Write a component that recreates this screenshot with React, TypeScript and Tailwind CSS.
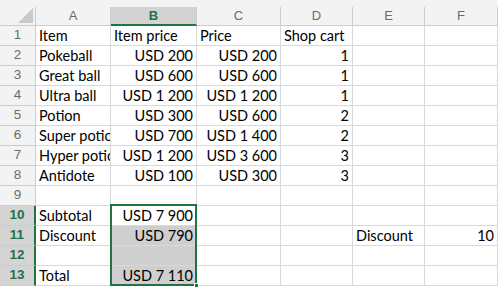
import React from 'react'

const cols = ['A', 'B', 'C', 'D', 'E', 'F']

type Cell = { v?: string; right?: boolean }

const rows: Cell[][] = [
  [{ v: 'Item' }, { v: 'Item price' }, { v: 'Price' }, { v: 'Shop cart' }, {}, {}],
  [{ v: 'Pokeball' }, { v: 'USD 200', right: true }, { v: 'USD 200', right: true }, { v: '1', right: true }, {}, {}],
  [{ v: 'Great ball' }, { v: 'USD 600', right: true }, { v: 'USD 600', right: true }, { v: '1', right: true }, {}, {}],
  [{ v: 'Ultra ball' }, { v: 'USD 1 200', right: true }, { v: 'USD 1 200', right: true }, { v: '1', right: true }, {}, {}],
  [{ v: 'Potion' }, { v: 'USD 300', right: true }, { v: 'USD 600', right: true }, { v: '2', right: true }, {}, {}],
  [{ v: 'Super potion' }, { v: 'USD 700', right: true }, { v: 'USD 1 400', right: true }, { v: '2', right: true }, {}, {}],
  [{ v: 'Hyper potion' }, { v: 'USD 1 200', right: true }, { v: 'USD 3 600', right: true }, { v: '3', right: true }, {}, {}],
  [{ v: 'Antidote' }, { v: 'USD 100', right: true }, { v: 'USD 300', right: true }, { v: '3', right: true }, {}, {}],
  [{}, {}, {}, {}, {}, {}],
  [{ v: 'Subtotal' }, { v: 'USD 7 900', right: true }, {}, {}, {}, {}],
  [{ v: 'Discount' }, { v: 'USD 790', right: true }, {}, {}, { v: 'Discount' }, { v: '10', right: true }],
  [{}, {}, {}, {}, {}, {}],
  [{ v: 'Total' }, { v: 'USD 7 110', right: true }, {}, {}, {}, {}],
]

const selectedRows = [10, 11, 12, 13]

export default function App() {
  return (
    <div className="relative h-[287px] w-[498px] overflow-hidden bg-white">
      <div className="grid grid-cols-[36px_75px_86px_84px_72px_72px_73px] grid-rows-[26px_repeat(13,20px)]">
        {/* header row */}
        <div className="bg-[#f3f3f3] pt-[7px]">
          <div className="relative h-full border-r border-b border-[#cccccc]">
            <svg className="absolute left-[18px] top-[1px]" width="15" height="15" viewBox="0 0 15 15">
              <polygon points="15,0 15,15 0,15" fill="#c9c9c9" />
            </svg>
          </div>
        </div>
        {cols.map((c) => {
          const sel = c === 'B'
          return (
            <div key={c} className="bg-[#f3f3f3] pt-[7px]">
              <div
                className={`flex h-full items-center justify-center border-r border-[#cccccc] text-[13px] ${
                  sel
                    ? 'border-b-2 border-b-[#217346] bg-[#d3d3d3] font-bold text-[#217346]'
                    : 'border-b text-[#6b6b6b]'
                }`}
                style={{ fontFamily: '"Liberation Sans", Arial, sans-serif' }}
              >
                {c}
              </div>
            </div>
          )
        })}

        {rows.map((r, i) => {
          const n = i + 1
          const rowSel = selectedRows.includes(n)
          return (
            <React.Fragment key={n}>
              <div
                className={`flex items-center justify-center border-b border-[#cccccc] text-[13.5px] ${
                  rowSel
                    ? 'border-r-2 border-r-[#217346] bg-[#d4d4d4] font-bold text-[#217346]'
                    : 'border-r bg-[#f3f3f3] text-[#6b6b6b]'
                }`}
                style={{ fontFamily: '"Liberation Sans", Arial, sans-serif' }}
              >
                {n}
              </div>
              {r.map((cell, j) => {
                const filled = j === 1 && n >= 11 && n <= 13
                return (
                  <div
                    key={j}
                    className={`flex items-center overflow-hidden whitespace-nowrap border-r border-b border-[#d9d9d9] px-[3px] text-[14.5px] text-black ${
                      cell.right ? 'justify-end' : 'justify-start'
                    } ${filled ? 'bg-[#cfcfcf] border-[#bdbdbd]' : ''}`}
                    style={{ fontFamily: 'Lato, "Open Sans", sans-serif' }}
                  >
                    {cell.v}
                  </div>
                )
              })}
            </React.Fragment>
          )
        })}
      </div>

      {/* selection B10:B13 */}
      <div className="pointer-events-none absolute left-[110px] top-[204px] h-[82px] w-[87px] border-2 border-[#217346]" />
      <div className="pointer-events-none absolute left-[194px] top-[283px] h-[5px] w-[5px] border border-white bg-[#217346]" />
    </div>
  )
}
